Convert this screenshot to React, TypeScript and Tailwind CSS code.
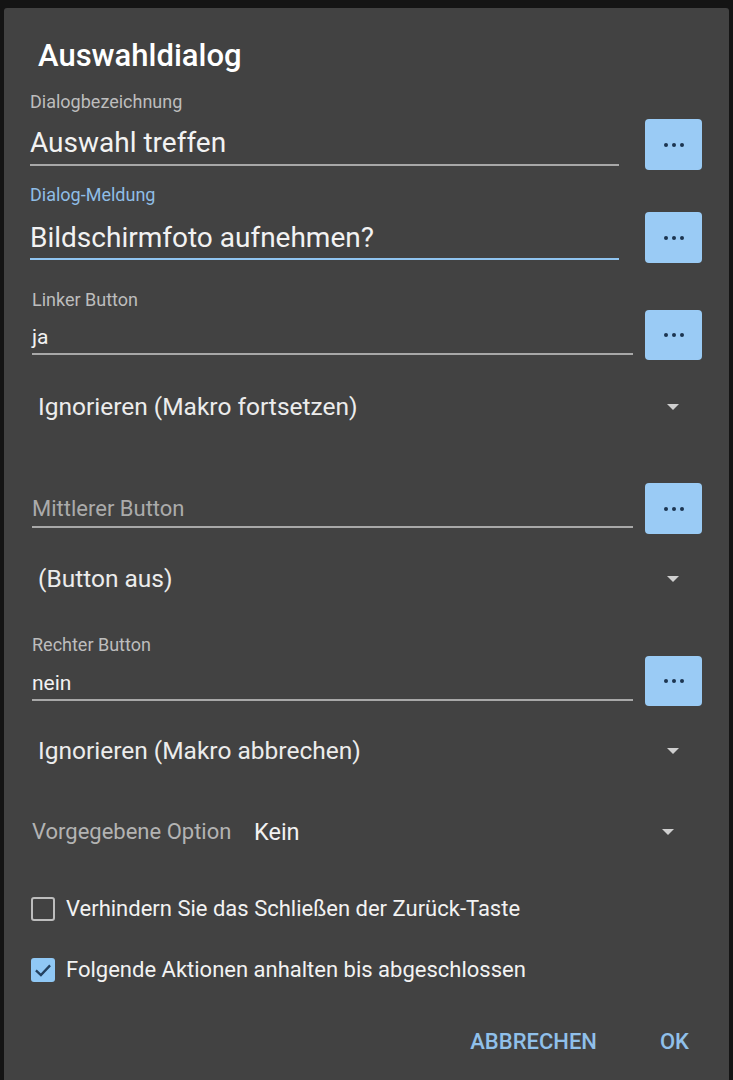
import React from "react";

const font = { fontFamily: "Roboto, 'Noto Sans', sans-serif" };

function Dots({ className }: { className: string }) {
  return (
    <div className={"flex h-[51px] w-[57px] shrink-0 items-center justify-center gap-[4px] rounded-[4px] bg-[#9acbf5] " + className}>
      <span className="h-[4px] w-[4px] rounded-full bg-[#1c3550]" />
      <span className="h-[4px] w-[4px] rounded-full bg-[#1c3550]" />
      <span className="h-[4px] w-[4px] rounded-full bg-[#1c3550]" />
    </div>
  );
}

function Arrow() {
  return (
    <svg width="14" height="8" viewBox="0 0 14 8" className="shrink-0">
      <path d="M1 1 L13 1 L7 7 Z" fill="#cfcfcf" />
    </svg>
  );
}

function Dropdown({ text, mt }: { text: string; mt: string }) {
  return (
    <div className={"flex h-[28px] items-center justify-between pl-[34px] pr-[49px] " + mt}>
      <span className="text-[24.5px] leading-[28px] text-[#ececec]">{text}</span>
      <Arrow />
    </div>
  );
}

export default function App() {
  return (
    <div className="h-[1080px] w-[733px] overflow-hidden bg-[#141414]" style={font}>
      <div className="ml-[4px] mt-[8px] h-[1100px] w-[725px] rounded-[3px] bg-[#424242] pt-[30px]">
        <div className="pl-[34px] text-[31px] font-medium leading-[36px] text-white">Auswahldialog</div>

        {/* Row 1 */}
        <div className="flex items-start pl-[26px]">
          <div className="flex w-[589px] flex-col pt-[18px]">
            <div className="text-[18px] leading-[20px] text-[#bdbdbd]">Dialogbezeichnung</div>
            <div className="mt-[16px] text-[28px] leading-[30px] text-[#f2f2f2]">Auswahl treffen</div>
            <div className="mt-[6px] h-[1.5px] bg-[#a8a8a8]" />
          </div>
          <Dots className="ml-[26px] mt-[45px]" />
        </div>

        {/* Row 2 */}
        <div className="flex items-start pl-[26px]">
          <div className="flex w-[589px] flex-col pt-[15px]">
            <div className="text-[18px] leading-[20px] text-[#8fbde6]">Dialog-Meldung</div>
            <div className="mt-[18px] text-[28px] leading-[30px] text-[#f2f2f2]">Bildschirmfoto aufnehmen?</div>
            <div className="mt-[5px] h-[2px] bg-[#90c4f0]" />
          </div>
          <Dots className="ml-[26px] mt-[42px]" />
        </div>

        {/* Row 3 */}
        <div className="flex items-start pl-[28px]">
          <div className="flex w-[601px] flex-col pt-[27px]">
            <div className="text-[18px] leading-[20px] text-[#bdbdbd]">Linker Button</div>
            <div className="mt-[15px] text-[21px] leading-[24px] text-[#f2f2f2]">ja</div>
            <div className="mt-[4px] h-[1.5px] bg-[#a8a8a8]" />
          </div>
          <Dots className="ml-[12px] mt-[47px] !h-[50px]" />
        </div>

        <Dropdown text="Ignorieren (Makro fortsetzen)" mt="mt-[33px]" />

        {/* Mittlerer */}
        <div className="flex items-start pl-[28px]">
          <div className="flex w-[601px] flex-col pt-[76px]">
            <div className="text-[22px] leading-[24px] text-[#ababab]">Mittlerer Button</div>
            <div className="mt-[5px] h-[1.5px] bg-[#a8a8a8]" />
          </div>
          <Dots className="ml-[12px] mt-[62px]" />
        </div>

        <Dropdown text="(Button aus)" mt="mt-[31px]" />

        {/* Rechter */}
        <div className="flex items-start pl-[28px]">
          <div className="flex w-[601px] flex-col pt-[42px]">
            <div className="text-[18px] leading-[20px] text-[#bdbdbd]">Rechter Button</div>
            <div className="mt-[16px] text-[21px] leading-[24px] text-[#f2f2f2]">nein</div>
            <div className="mt-[4px] h-[1.5px] bg-[#a8a8a8]" />
          </div>
          <Dots className="ml-[12px] mt-[63px] !h-[50px]" />
        </div>

        <Dropdown text="Ignorieren (Makro abbrechen)" mt="mt-[31px]" />

        {/* Vorgegebene Option */}
        <div className="mt-[53px] flex h-[28px] items-center pl-[28px] pr-[54px]">
          <span className="w-[222px] text-[22px] leading-[28px] text-[#b3b3b3]">Vorgegebene Option</span>
          <span className="flex-1 text-[23.5px] leading-[28px] text-[#f2f2f2]">Kein</span>
          <Arrow />
        </div>

        {/* Checkboxes */}
        <div className="mt-[51px] flex h-[24px] items-center pl-[27px]">
          <div className="h-[24px] w-[24px] rounded-[3px] border-2 border-[#bdbdbd]" />
          <span className="ml-[11px] text-[22px] leading-[24px] text-[#f2f2f2]">Verhindern Sie das Schließen der Zurück-Taste</span>
        </div>
        <div className="mt-[37px] flex h-[24px] items-center pl-[27px]">
          <div className="flex h-[24px] w-[24px] items-center justify-center rounded-[3px] bg-[#90c8f5]">
            <svg width="20" height="20" viewBox="0 0 24 24">
              <path d="M3.5 12.5 L9.5 18 L20.5 6.5" fill="none" stroke="#24415f" strokeWidth="2.8" />
            </svg>
          </div>
          <span className="ml-[11px] text-[22px] leading-[24px] text-[#f2f2f2]">Folgende Aktionen anhalten bis abgeschlossen</span>
        </div>

        {/* Actions */}
        <div className="mt-[46px] flex h-[28px] items-center justify-end pr-[40px]">
          <span className="text-[22px] font-medium leading-[28px] text-[#90c0ea]">ABBRECHEN</span>
          <span className="ml-[63px] text-[22px] font-medium leading-[28px] text-[#90c0ea]">OK</span>
        </div>
      </div>
    </div>
  );
}
